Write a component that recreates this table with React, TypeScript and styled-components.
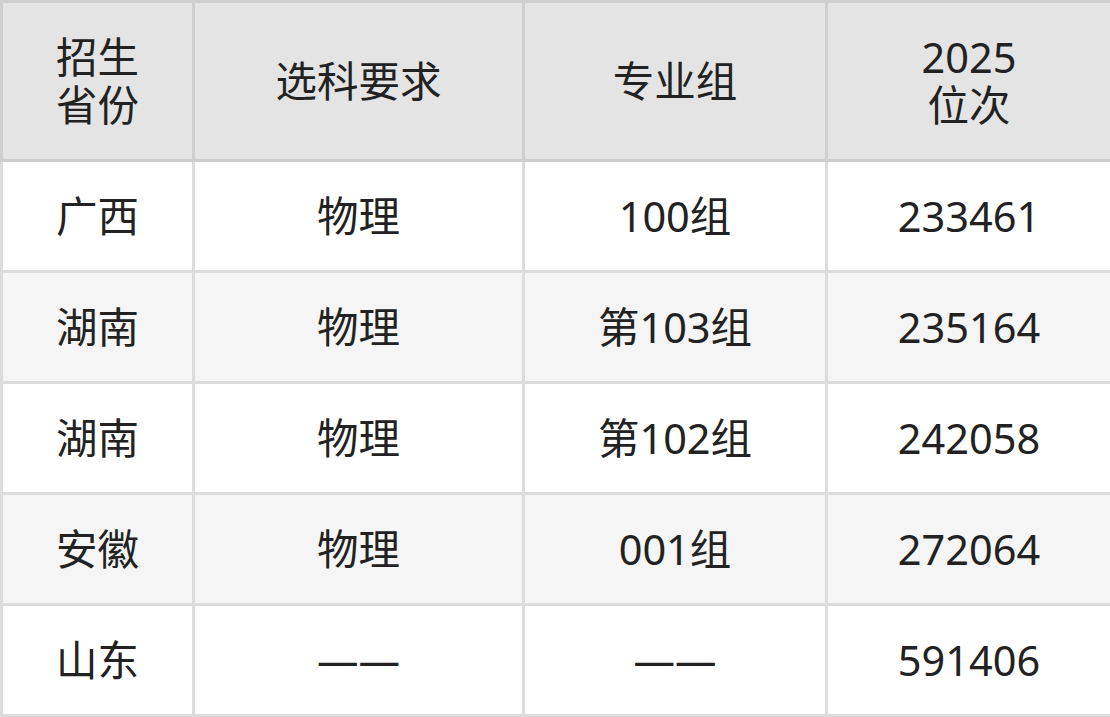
import React from 'react';
import styled, { createGlobalStyle } from 'styled-components';

const GlobalStyle = createGlobalStyle`
  html, body {
    margin: 0;
    padding: 0;
    background: #fff;
  }
  body {
    font-family: "Noto Sans", "Noto Sans CJK SC", sans-serif;
    color: #222;
  }
`;

type RowData = {
  province: string;
  subject: string;
  group: string;
  rank: string;
};

const ROWS: RowData[] = [
  { province: '广西', subject: '物理', group: '100组', rank: '233461' },
  { province: '湖南', subject: '物理', group: '第103组', rank: '235164' },
  { province: '湖南', subject: '物理', group: '第102组', rank: '242058' },
  { province: '安徽', subject: '物理', group: '001组', rank: '272064' },
  { province: '山东', subject: '——', group: '——', rank: '591406' },
];

const App: React.FC = () => {
  return (
    <>
      <GlobalStyle />
      <Table>
        <colgroup>
          <col style={{ width: 192 }} />
          <col style={{ width: 330 }} />
          <col style={{ width: 303 }} />
          <col style={{ width: 285 }} />
        </colgroup>
        <thead>
          <HeadRow>
            <HeadCell>招生<br />省份</HeadCell>
            <HeadCell>选科要求</HeadCell>
            <HeadCell>专业组</HeadCell>
            <HeadCell>2025<br />位次</HeadCell>
          </HeadRow>
        </thead>
        <tbody>
          {ROWS.map((row, i) => (
            <BodyRow key={i} $striped={i % 2 === 1}>
              <Cell>{row.province}</Cell>
              <Cell>{row.subject}</Cell>
              <Cell>{row.group}</Cell>
              <Cell>{row.rank}</Cell>
            </BodyRow>
          ))}
        </tbody>
      </Table>
    </>
  );
};

export default App;

const Table = styled.table`
  width: 1110px;
  border-collapse: collapse;
  table-layout: fixed;
  font-size: 41.5px;
  line-height: 48px;
  border: 3px solid #dcdcdc;
`;

const HeadRow = styled.tr`
  height: 159px;
  background: #e4e4e4;
`;

const HeadCell = styled.th`
  font-weight: 400;
  text-align: center;
  vertical-align: middle;
  padding: 0;
  border: 3px solid #cfcfcf;
`;

const BodyRow = styled.tr<{ $striped: boolean }>`
  height: 111px;
  background: ${(p) => (p.$striped ? '#f5f5f5' : '#ffffff')};
`;

const Cell = styled.td`
  text-align: center;
  vertical-align: middle;
  padding: 0;
  border: 3px solid #dcdcdc;
`;
